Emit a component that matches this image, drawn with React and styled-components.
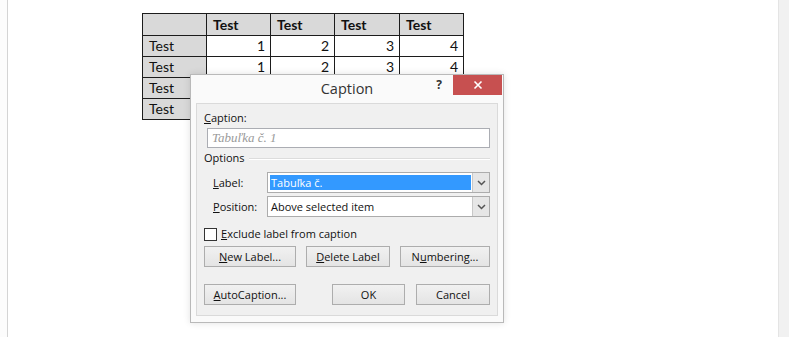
import React from "react";
import styled, { createGlobalStyle } from "styled-components";

const GlobalStyle = createGlobalStyle`
  html, body { margin: 0; padding: 0; background: #fff; overflow: hidden; }
  * { box-sizing: border-box; }
`;

const UI_FONT = `"Open Sans", "Noto Sans", sans-serif`;

const Screen = styled.div`
  position: relative;
  width: 789px;
  height: 337px;
  display: flex;
  padding-left: 7px;
  background: #fcfcfc;
`;

const Page = styled.div`
  flex: 1;
  background: #fff;
  border-left: 1px solid #d4d4d4;
  padding: 13px 0 0 134px;
`;

const RightGutter = styled.div`
  width: 11px;
  background: #f1f1f1;
  border-left: 1px solid #e4e4e4;
`;

const Grid = styled.table`
  border-collapse: collapse;
  table-layout: fixed;
  width: 322px;
  font-family: Lato, "Open Sans", sans-serif;
  font-size: 14px;
  color: #111;
`;

const Row = styled.tr`
  height: ${(p) => (p.$head ? 22 : 21)}px;
`;

const Cell = styled.td`
  border: 1px solid #1c1c1c;
  padding: 0 5px 0 6px;
  line-height: 18px;
  background: ${(p) => (p.$shaded ? "#d9d9d9" : "#fff")};
  text-align: ${(p) => (p.$num ? "right" : "left")};
  font-weight: ${(p) => (p.$bold ? 700 : 400)};
`;

const Dialog = styled.div`
  position: absolute;
  left: 190px;
  top: 74px;
  width: 314px;
  height: 249px;
  display: flex;
  flex-direction: column;
  background: #fafafa;
  border: 1px solid #b9b9b9;
  box-shadow: 0 0 7px rgba(0, 0, 0, 0.12);
  font-family: ${UI_FONT};
  font-size: 11px;
  color: #111;
`;

const TitleBar = styled.div`
  height: 28px;
  display: grid;
  grid-template-columns: 1fr auto 1fr;
  align-items: start;
`;

const Title = styled.div`
  grid-column: 2;
  font-size: 14.5px;
  line-height: 28px;
  color: #333;
`;

const Controls = styled.div`
  grid-column: 3;
  justify-self: end;
  display: flex;
  align-items: flex-start;
`;

const Help = styled.div`
  width: 28px;
  height: 20px;
  text-align: center;
  font-weight: 700;
  font-size: 12px;
  line-height: 20px;
  color: #333;
`;

const Close = styled.div`
  width: 49px;
  height: 20px;
  margin-right: 1px;
  background: #c75050;
  display: grid;
  place-items: center;
`;

const Panel = styled.div`
  flex: 1;
  margin: 0 5px 6px 5px;
  background: #f0f0f0;
  border: 1px solid #dadada;
  padding: 6px 7px 0 7px;
  display: flex;
  flex-direction: column;
`;

const Text = styled.div`
  line-height: 16px;
  white-space: nowrap;
  padding-left: ${(p) => p.$indent || 0}px;
`;

const Key = styled.span`
  text-decoration: underline;
  text-underline-offset: 1px;
`;

const CaptionInput = styled.div`
  margin: 2px 0 0 3px;
  height: 20px;
  border: 1px solid #abadb3;
  background: #fff;
  padding-left: 4px;
  font-family: "Liberation Serif", "DejaVu Serif", serif;
  font-style: italic;
  font-size: 13px;
  line-height: 18px;
  color: #9a9a9a;
`;

const GroupHead = styled.div`
  margin-top: 2px;
  display: flex;
  align-items: center;
  gap: 4px;
`;

const GroupLine = styled.div`
  flex: 1;
  height: 2px;
  margin-top: 1px;
  border-top: 1px solid #dcdcdc;
  border-bottom: 1px solid #fff;
`;

const FieldRow = styled.div`
  margin-top: ${(p) => p.$gap}px;
  display: grid;
  grid-template-columns: 63px 1fr;
  align-items: center;
`;

const Combo = styled.div`
  height: 21px;
  display: flex;
  border: 1px solid #acacac;
  background: #fff;
`;

const ComboValue = styled.div`
  flex: 1;
  margin: 2px 1px 2px 2px;
  padding-left: 1px;
  line-height: 15px;
  white-space: nowrap;
  background: ${(p) => (p.$selected ? "#3399ff" : "transparent")};
  color: ${(p) => (p.$selected ? "#fff" : "#111")};
`;

const ComboArrow = styled.div`
  width: 17px;
  background: #e6e6e6;
  border-left: 1px solid #c8c8c8;
  display: grid;
  place-items: center;
`;

const CheckRow = styled.div`
  margin-top: 9px;
  display: flex;
  align-items: center;
  gap: 4px;
`;

const Box = styled.div`
  width: 13px;
  height: 13px;
  border: 1px solid #333;
  background: #fff;
`;

const ButtonRow = styled.div`
  margin-top: ${(p) => p.$gap}px;
  display: flex;
  justify-content: space-between;
`;

const Spacer = styled.div`
  flex: 1;
`;

const Button = styled.div`
  width: ${(p) => p.$w}px;
  height: 21px;
  margin-left: ${(p) => p.$ml || 0}px;
  border: 1px solid #adadad;
  background: linear-gradient(#f1f1f1, #e4e4e4);
  text-align: center;
  line-height: 19px;
  white-space: nowrap;
  color: #111;
`;

const Chevron = () => (
  <svg width="9" height="6" viewBox="0 0 9 6">
    <path d="M1 1 L4.5 4.5 L8 1" fill="none" stroke="#555" strokeWidth="1.5" />
  </svg>
);

const CloseX = () => (
  <svg width="10" height="10" viewBox="0 0 10 10">
    <path d="M1.5 1.5 L8.5 8.5 M8.5 1.5 L1.5 8.5" stroke="#fff" strokeWidth="1.6" />
  </svg>
);

/* rows 3 and 4 are covered by the dialog; only their row labels show */
const rows = [
  ["Test", 1, 2, 3, 4],
  ["Test", 1, 2, 3, 4],
  ["Test", "", "", "", ""],
  ["Test", "", "", "", ""],
];

export default function App() {
  return (
    <>
      <GlobalStyle />
      <Screen>
        <Page>
          <Grid>
            <colgroup>
              <col style={{ width: 64 }} />
              <col style={{ width: 64 }} />
              <col style={{ width: 64 }} />
              <col style={{ width: 65 }} />
              <col style={{ width: 64 }} />
            </colgroup>
            <tbody>
              <Row $head>
                <Cell $shaded />
                {["Test", "Test", "Test", "Test"].map((t, i) => (
                  <Cell key={i} $shaded $bold>
                    {t}
                  </Cell>
                ))}
              </Row>
              {rows.map((r, i) => (
                <Row key={i}>
                  <Cell $shaded>{r[0]}</Cell>
                  {r.slice(1).map((n, j) => (
                    <Cell key={j} $num>
                      {n}
                    </Cell>
                  ))}
                </Row>
              ))}
            </tbody>
          </Grid>
        </Page>
        <RightGutter />

        <Dialog>
          <TitleBar>
            <Title>Caption</Title>
            <Controls>
              <Help>?</Help>
              <Close>
                <CloseX />
              </Close>
            </Controls>
          </TitleBar>
          <Panel>
            <Text>
              <Key>C</Key>aption:
            </Text>
            <CaptionInput>Tabuľka č. 1</CaptionInput>
            <GroupHead>
              <Text>Options</Text>
              <GroupLine />
            </GroupHead>
            <FieldRow $gap={6}>
              <Text $indent={9}>
                <Key>L</Key>abel:
              </Text>
              <Combo>
                <ComboValue $selected>Tabuľka č.</ComboValue>
                <ComboArrow>
                  <Chevron />
                </ComboArrow>
              </Combo>
            </FieldRow>
            <FieldRow $gap={3}>
              <Text $indent={9}>
                <Key>P</Key>osition:
              </Text>
              <Combo>
                <ComboValue>Above selected item</ComboValue>
                <ComboArrow>
                  <Chevron />
                </ComboArrow>
              </Combo>
            </FieldRow>
            <CheckRow>
              <Box />
              <Text>
                <Key>E</Key>xclude label from caption
              </Text>
            </CheckRow>
            <ButtonRow $gap={4}>
              <Button $w={92}>
                <Key>N</Key>ew Label...
              </Button>
              <Button $w={84}>
                <Key>D</Key>elete Label
              </Button>
              <Button $w={90}>
                N<Key>u</Key>mbering...
              </Button>
            </ButtonRow>
            <ButtonRow $gap={17}>
              <Button $w={92}>
                <Key>A</Key>utoCaption...
              </Button>
              <Spacer />
              <Button $w={73}>OK</Button>
              <Button $w={74} $ml={11}>
                Cancel
              </Button>
            </ButtonRow>
          </Panel>
        </Dialog>
      </Screen>
    </>
  );
}
